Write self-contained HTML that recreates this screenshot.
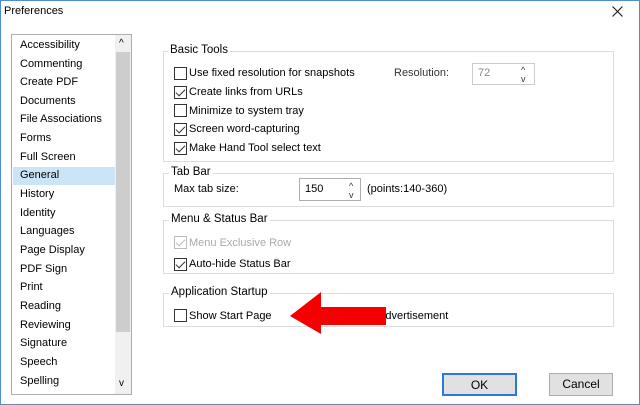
<!DOCTYPE html>
<html><head><style>
*{margin:0;padding:0;box-sizing:border-box}
body{width:640px;height:405px;background:#fff;font-family:"Liberation Sans",sans-serif;font-size:11px;color:#000;position:relative;overflow:hidden}
.a{position:absolute;white-space:nowrap}
.win{position:absolute;left:0;top:0;width:640px;height:405px;border:1px solid #4a8fd0}
.list{position:absolute;left:11px;top:34px;width:121px;height:361px;border:1px solid #adadad}
.sb{position:absolute;left:115px;top:35px;width:16px;height:359px;background:#f0f0f0}
.thumb{position:absolute;left:116px;top:52px;width:14px;height:280px;background:#cdcdcd}
.it{position:absolute;left:20px;font-size:11px}
.grp{position:absolute;border:1px solid #dcdcdc}
.gl{position:absolute;background:#fff;padding:0 2px;font-size:11.5px}
.cb{position:absolute;width:13px;height:13px;border:1px solid #333;background:#fff}
.cb.c::after{content:"";position:absolute;left:3px;top:0px;width:4px;height:8px;border:solid #333;border-width:0 1.5px 1.5px 0;transform:rotate(45deg)}
.cb.d{border-color:#bbb}.cb.d::after{border-color:#bbb}
.btn{position:absolute;height:23px;background:#e1e1e1;border:1px solid #adadad;text-align:center;line-height:21px;font-size:12px}
.inp{position:absolute;border:1px solid #adadad;background:#fff}
.spin{position:absolute;font-size:9px;line-height:9px;color:#333}
</style></head><body>
<div class="win"></div>
<div class="a" style="left:4px;top:5px">Preferences</div>
<svg class="a" style="left:612px;top:6px" width="11" height="11"><path d="M0.5 0.5L10.5 10.5M10.5 0.5L0.5 10.5" stroke="#222" stroke-width="1.2"/></svg>
<div class="list"></div>
<div class="a" style="left:13px;top:167px;width:102px;height:18px;background:#cce4f7"></div>
<div class="sb"></div><div class="thumb"></div>
<div class="a" style="left:119px;top:38px;font-size:10px">^</div>
<div class="a" style="left:119px;top:378px;font-size:10px">v</div>
<div class="it" style="top:39px">Accessibility</div>
<div class="it" style="top:58px">Commenting</div>
<div class="it" style="top:76px">Create PDF</div>
<div class="it" style="top:95px">Documents</div>
<div class="it" style="top:113px">File Associations</div>
<div class="it" style="top:132px">Forms</div>
<div class="it" style="top:151px">Full Screen</div>
<div class="it" style="top:169px">General</div>
<div class="it" style="top:188px">History</div>
<div class="it" style="top:207px">Identity</div>
<div class="it" style="top:225px">Languages</div>
<div class="it" style="top:244px">Page Display</div>
<div class="it" style="top:263px">PDF Sign</div>
<div class="it" style="top:281px">Print</div>
<div class="it" style="top:300px">Reading</div>
<div class="it" style="top:319px">Reviewing</div>
<div class="it" style="top:337px">Signature</div>
<div class="it" style="top:356px">Speech</div>
<div class="it" style="top:375px">Spelling</div>

<div class="grp" style="left:163px;top:51px;width:451px;height:111px"></div>
<div class="gl" style="left:168px;top:44px">Basic Tools</div>
<div class="cb" style="left:174px;top:67px"></div><div class="a" style="left:189px;top:67px">Use fixed resolution for snapshots</div>
<div class="cb c" style="left:174px;top:86px"></div><div class="a" style="left:189px;top:86px">Create links from URLs</div>
<div class="cb" style="left:174px;top:104px"></div><div class="a" style="left:189px;top:105px">Minimize to system tray</div>
<div class="cb c" style="left:174px;top:123px"></div><div class="a" style="left:189px;top:123px">Screen word-capturing</div>
<div class="cb c" style="left:174px;top:142px"></div><div class="a" style="left:189px;top:142px">Make Hand Tool select text</div>
<div class="a" style="left:394px;top:67px;color:#333">Resolution:</div>
<div class="inp" style="left:472px;top:63px;width:63px;height:22px;border-color:#ccc"></div>
<div class="a" style="left:478px;top:67px;color:#888">72</div>
<div class="spin" style="left:521px;top:66px">^<br>v</div>

<div class="grp" style="left:163px;top:173px;width:451px;height:34px"></div>
<div class="gl" style="left:169px;top:166px">Tab Bar</div>
<div class="a" style="left:174px;top:183px">Max tab size:</div>
<div class="inp" style="left:299px;top:178px;width:62px;height:23px"></div>
<div class="a" style="left:305px;top:183px">150</div>
<div class="spin" style="left:349px;top:182px">^<br>v</div>
<div class="a" style="left:367px;top:183px">(points:140-360)</div>

<div class="grp" style="left:163px;top:220px;width:451px;height:54px"></div>
<div class="gl" style="left:169px;top:213px">Menu &amp; Status Bar</div>
<div class="cb c d" style="left:174px;top:236px"></div><div class="a" style="left:189px;top:237px;color:#aaa">Menu Exclusive Row</div>
<div class="cb c" style="left:174px;top:258px"></div><div class="a" style="left:189px;top:258px">Auto-hide Status Bar</div>

<div class="grp" style="left:163px;top:293px;width:451px;height:34px"></div>
<div class="gl" style="left:169px;top:286px">Application Startup</div>
<div class="cb" style="left:174px;top:309px"></div><div class="a" style="left:189px;top:310px">Show Start Page</div>
<div class="a" style="left:378px;top:310px">Advertisement</div>
<svg class="a" style="left:288px;top:290px" width="100" height="46"><polygon points="2,26 33,2 33,17 98,17 98,35 33,35 33,44" fill="#f40000"/></svg>

<div class="btn" style="left:442px;top:373px;width:75px;border:2px solid #2b7ad8">OK</div>
<div class="btn" style="left:549px;top:373px;width:64px">Cancel</div>
</body></html>
